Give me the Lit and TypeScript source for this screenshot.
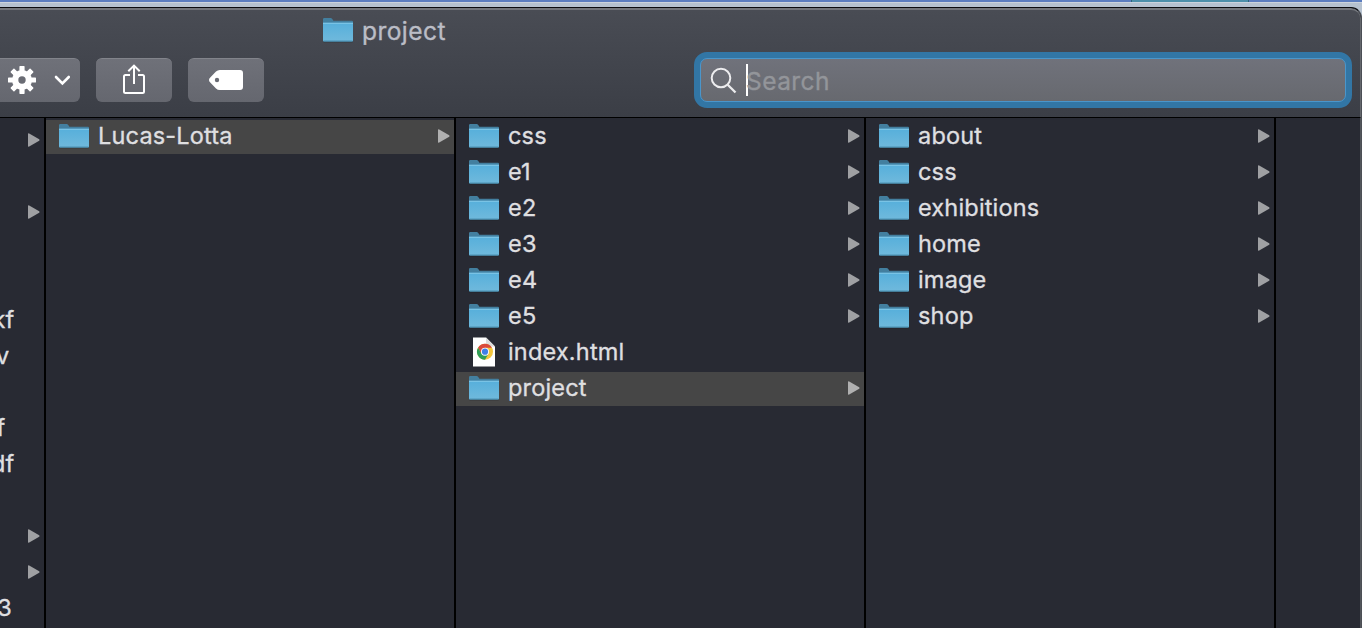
import { LitElement, html, css, svg, nothing } from "lit";
import { customElement, property } from "lit/decorators.js";
import { styleMap } from "lit/directives/style-map.js";

interface Entry {
  name?: string;
  icon?: "folder" | "html";
  arrow?: boolean;
  selected?: boolean;
  end?: number;
}

const dir = (name: string, selected = false): Entry => ({ name, icon: "folder", arrow: true, selected });

const edge: Entry[] = [
  { arrow: true }, {}, { arrow: true }, {}, {},
  { name: "kf", end: 14.5 }, { name: "v", end: 9.5 }, {}, { name: "f", end: 5.5 }, { name: "df", end: 14.5 },
  {}, { arrow: true }, { arrow: true }, { name: "3", end: 12 },
];
const first: Entry[] = [dir("Lucas-Lotta", true)];
const second: Entry[] = [
  dir("css"), dir("e1"), dir("e2"), dir("e3"), dir("e4"), dir("e5"),
  { name: "index.html", icon: "html" }, dir("project", true),
];
const third: Entry[] = ["about", "css", "exhibitions", "home", "image", "shop"].map((n) => dir(n));

@customElement("folder-icon")
class FolderIcon extends LitElement {
  static styles = css`
    :host { display: block; width: 32px; height: 26px; flex: none; }
    svg { display: block; }
  `;
  render() {
    return html`<svg width="32" height="26" viewBox="0 0 32 26">
      <defs>
        <linearGradient id="g" x1="0" y1="0" x2="0" y2="1">
          <stop offset="0" stop-color="#56afdb" /><stop offset="1" stop-color="#70b9dc" />
        </linearGradient>
      </defs>
      <path d="M1.5 24h29v1.3h-29z" fill="#16181d" opacity=".5" />
      <path d="M1 2.2Q1 1 2.2 1H8.5Q9.6 1 10.3 2L11.4 3.7H30Q31 3.7 31 4.8V10H1Z" fill="#437f9f" />
      <path d="M1 5.7H31V23.2Q31 24.5 29.8 24.5H2.2Q1 24.5 1 23.2Z" fill="url(#g)" />
      <path d="M1 6.3H31" stroke="#82c9e8" stroke-width="1" />
      <path d="M1.4 24.1H30.6" stroke="#4488a9" stroke-width="1" />
    </svg>`;
  }
}

@customElement("html-icon")
class HtmlIcon extends LitElement {
  static styles = css`
    :host { display: block; width: 32px; height: 30px; flex: none; }
    svg { display: block; }
  `;
  render() {
    return html`<svg width="32" height="30" viewBox="0 0 32 30">
      <path d="M5 .5H18L27 9.5V29.5H5Z" fill="#fff" />
      <path d="M18 .5L27 9.5H20Q18 9.5 18 7.5Z" fill="#dcdcdc" />
      <g transform="translate(17 14.7)">
        <circle r="8" fill="#f4c63d" />
        <path d="M-6.93-4A8 8 0 0 1 6.93-4H0L-3.46 2Z" fill="#d94a3d" />
        <path d="M-6.93-4A8 8 0 0 0 0 8L3.46 2H-3.46Z" fill="#2f9e58" />
        <circle r="4" fill="#fff" />
        <circle r="3.1" fill="#3f7fe8" />
      </g>
    </svg>`;
  }
}

@customElement("file-column")
class FileColumn extends LitElement {
  @property({ attribute: false }) entries: Entry[] = [];
  static styles = css`
    :host { display: block; box-sizing: border-box; padding-top: 2px; border-right: 2px solid #000; overflow: hidden; }
    .row { display: flex; align-items: center; height: 34px; margin-bottom: 2px; padding: 0 4px 0 12px; color: #dfdfe0; }
    .row.bare { padding-left: 0; }
    .selected { background: #464646; }
    .label { font-size: 23.5px; line-height: 32px; height: 34px; margin-left: 8px; white-space: nowrap; letter-spacing: 0.18px;
      -webkit-text-stroke: 0.35px currentColor; }
    .clipped { display: flex; justify-content: flex-end; margin-left: 0; }
    .arrow { width: 13px; height: 16px; margin-left: auto; margin-top: -2px; flex: none; fill: #9fa0a3; }
    .selected .arrow { fill: #b0b0b0; }
    folder-icon { margin-top: -2px; }
    html-icon { margin-top: -2px; }
  `;
  render() {
    return this.entries.map((e) => html`<div class="row ${e.selected ? "selected" : ""} ${e.icon ? "" : "bare"}">
      ${e.icon === "folder" ? html`<folder-icon></folder-icon>` : e.icon === "html" ? html`<html-icon></html-icon>` : nothing}
      ${e.name ? html`<span class="label ${e.end ? "clipped" : ""}" style=${styleMap(e.end ? { width: `${e.end}px` } : {})}><span>${e.name}</span></span>` : nothing}
      ${e.arrow ? html`<svg class="arrow" viewBox="0 0 13 16"><path d="M1 2Q1 .8 2.2 1.4L12.2 7.3Q13 8 12.2 8.7L2.2 14.6Q1 15.2 1 14Z" /></svg>` : nothing}
    </div>`);
  }
}

@customElement("app-root")
class AppRoot extends LitElement {
  static styles = css`
    :host { display: block; width: 1362px; height: 628px; overflow: hidden; font-family: Inter, "Liberation Sans", sans-serif;
      background: #b6c2d0; }
    .desktop { height: 7px; background: linear-gradient(#5b7dc0 0 2px, #ccd4dd 2px 3px, #b6c2d0 3px); display: flex; justify-content: flex-end; }
    .tab { width: 118px; height: 2px; margin-right: 113px; background: #4c8faa; border-inline: 1px solid #2e6478; box-sizing: border-box; }
    .window { box-sizing: border-box; height: 621px; border-top: 1px solid #0b0c10; border-right: 1px solid #4c4f55;
      border-top-right-radius: 11px; overflow: hidden; background: #282a33; display: flex; flex-direction: column; }
    .chrome { flex: none; height: 110px; box-sizing: border-box; border-bottom: 1px solid #000; border-top: 2px solid #73767c;
      border-right: 1px solid #65686d; border-top-right-radius: 10px; background: linear-gradient(#494c54, #3b3e46); }
    .title { display: flex; align-items: center; height: 44px; padding-left: 322px; font-size: 24.5px; color: #bbbdc6; }
    .title folder-icon { margin-top: -4px; }
    .title span { margin-left: 8px; line-height: 42px; height: 44px; letter-spacing: 0.45px; -webkit-text-stroke: 0.35px currentColor; }
    .tools { display: flex; height: 56px; margin-top: -2px; align-items: center; }
    .btn { width: 76px; height: 44px; margin-right: 16px; border-radius: 6px; box-sizing: border-box; border-top: 1px solid #82848b;
      background: linear-gradient(#6f7179, #65676f); }
    .btn.gear { width: 80px; border-top-left-radius: 0; border-bottom-left-radius: 0; }
    .btn svg { display: block; margin-top: -1px; }
    .search { box-sizing: border-box; width: 658px; height: 56px; margin-left: 414px; border: 6px solid #3276a5; border-radius: 13px;
      background: #3276a5; }
    .field { box-sizing: border-box; height: 44px; border: 1px solid #4a96cb; border-radius: 7px; display: flex; align-items: center;
      background: linear-gradient(#70727b, #67696f); color: #93959a; font-size: 24.5px; }
    .field svg { margin-left: 9px; flex: none; }
    .caret { width: 2px; height: 32px; background: #fff; margin-left: 8px; flex: none; }
    .hint { margin-left: -2px; padding-top: 1px; line-height: 42px; letter-spacing: 0.45px; -webkit-text-stroke: 0.35px currentColor; }
    .columns { flex: 1; display: grid; grid-template-columns: 46px 410px 410px 410px 1fr; min-height: 0; border-right: 1px solid #53565c; }
    .edge { padding-top: 6px; }
  `;
  render() {
    return html`
      <div class="desktop"><div class="tab"></div></div>
      <div class="window">
        <div class="chrome">
          <div class="title"><folder-icon></folder-icon><span>project</span></div>
          <div class="tools">
            <div class="btn gear">
              <svg width="80" height="44" viewBox="0 0 80 44">
                <g transform="translate(22 22)" fill="#fff">
                  ${[0, 45, 90, 135].map((a) => svg`<rect x="-2.6" y="-14" width="5.2" height="28" rx=".7" transform="rotate(${a})" />`)}
                  <circle r="10" />
                  <circle r="3.7" fill="#6a6c74" />
                </g>
                <path d="M56 19L62.4 25.5L68.8 19" fill="none" stroke="#fff" stroke-width="2.6" stroke-linecap="round" />
              </svg>
            </div>
            <div class="btn">
              <svg width="76" height="44" viewBox="0 0 76 44" fill="none" stroke="#fff" stroke-width="2">
                <path d="M34 17H29.5Q28 17 28 18.5V33.5Q28 35 29.5 35H46.5Q48 35 48 33.5V18.5Q48 17 46.5 17H42" />
                <path d="M38 26V8M32.3 13.3L38 7.6L43.7 13.3" />
              </svg>
            </div>
            <div class="btn">
              <svg width="76" height="44" viewBox="0 0 76 44">
                <path d="M21 22Q21 20.8 22 19.8L28 13.6Q29.6 12 31.8 12H52Q55 12 55 15V29Q55 32 52 32H31.8Q29.6 32 28 30.4L22 24.2Q21 23.2 21 22Z" fill="#fff" />
                <circle cx="29" cy="22" r="2.2" fill="#6a6c74" />
              </svg>
            </div>
            <div class="search">
              <div class="field">
                <svg width="28" height="30" viewBox="0 0 28 30" fill="none" stroke="#ececee" stroke-width="2">
                  <circle cx="11" cy="13" r="9.3" /><path d="M17.7 19.7L25.5 27.5" stroke-width="2.3" />
                </svg>
                <div class="caret"></div><span class="hint">Search</span>
              </div>
            </div>
          </div>
        </div>
        <div class="columns">
          <file-column class="edge" .entries=${edge}></file-column>
          <file-column .entries=${first}></file-column>
          <file-column .entries=${second}></file-column>
          <file-column .entries=${third}></file-column>
        </div>
      </div>`;
  }
}
